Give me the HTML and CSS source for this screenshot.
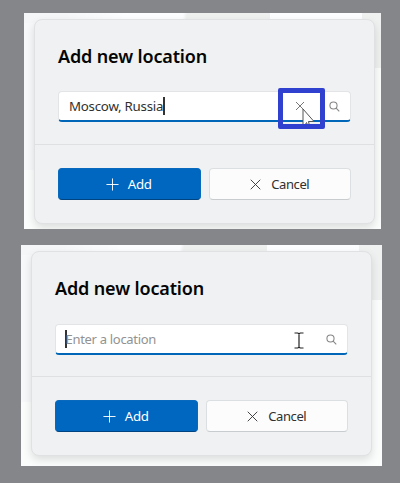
FILE: index.html
```
<!DOCTYPE html>
<html lang="en">
<head>
<meta charset="utf-8">
<title>Add new location</title>
<link rel="stylesheet" href="styles.css">
</head>
<body>
<main class="board">
  <section class="panel panel-first">
    <div class="dialog">
      <div class="body">
        <h1>Add new location</h1>
        <div class="field">
          <span class="value">Moscow, Russia</span><span class="caret"></span>
          <svg class="clear" viewBox="0 0 10 10"><path d="M1 1l8 8M9 1l-8 8"/></svg>
          <svg class="search" viewBox="0 0 12 12"><circle cx="4.9" cy="4.9" r="3.9"/><path d="M7.8 7.8l3.4 3.4"/></svg>
          <div class="highlight"></div>
          <svg class="pointer" viewBox="0 0 13 16"><path d="M1 1v17h1.5l2-3.5L6 18h1.5l-1-4.5H12z"/></svg>
        </div>
      </div>
      <div class="actions">
        <div class="button primary"><svg class="plus" viewBox="0 0 14 14"><path d="M7 .5v13M.5 7h13"/></svg><span class="label-add">Add</span></div>
        <div class="button"><svg class="cross" viewBox="0 0 12 12"><path d="M.8.8l10.4 10.4M11.2.8L.8 11.2"/></svg><span class="label-cancel">Cancel</span></div>
      </div>
    </div>
  </section>
  <section class="panel panel-second">
    <div class="dialog">
      <div class="body">
        <h1>Add new location</h1>
        <div class="field">
          <span class="caret"></span><span class="placeholder">Enter a location</span>
          <svg class="search" viewBox="0 0 12 12"><circle cx="4.9" cy="4.9" r="3.9"/><path d="M7.8 7.8l3.4 3.4"/></svg>
          <svg class="ibeam" viewBox="0 0 10 17"><path d="M.5 1h3.3L5 1.7 6.2 1h3.3M5 1.5v14M.5 16h3.3L5 15.3l1.2.7h3.3"/></svg>
        </div>
      </div>
      <div class="actions">
        <div class="button primary"><svg class="plus" viewBox="0 0 14 14"><path d="M7 .5v13M.5 7h13"/></svg><span class="label-add">Add</span></div>
        <div class="button"><svg class="cross" viewBox="0 0 12 12"><path d="M.8.8l10.4 10.4M11.2.8L.8 11.2"/></svg><span class="label-cancel">Cancel</span></div>
      </div>
    </div>
  </section>
</main>
</body>
</html>
```
FILE: styles.css
```
* { box-sizing: border-box; }
body {
  margin: 0;
  background: #85868a;
  color: #191919;
  font-family: "Noto Sans", "Open Sans", sans-serif;
}
svg { display: block; fill: none; overflow: visible; flex: none; }
.board { height: 483px; padding-top: 13px; overflow: hidden; }
.panel {
  overflow: hidden;
  background:
    linear-gradient(100deg, #f5f6f7 40px, #fcfdfe 100px, #fcfdfe 157px, #eeefef 161px) 0 0 / 246px 10px no-repeat,
    linear-gradient(#fcfdfe, #fcfdfe) 246px 0 / 92px 10px no-repeat,
    linear-gradient(#eff1f0, #eff1f0) 100% 0 / 42px 55px no-repeat,
    linear-gradient(#f7f8fa, #f7f8fa) 0 0 / 40px 157px no-repeat,
    #fbfcfc;
}
.panel-first { width: 357px; height: 216px; margin-left: 24px; padding: 6px 0 0 10px; }
.panel-second { width: 361px; height: 221px; margin: 16px 0 0 21px; padding: 6px 0 0 10px; }
.dialog {
  width: 341px;
  height: 205px;
  border: 1px solid #dfe1e3;
  border-radius: 8px;
  background: #eff1f2;
  box-shadow: 0 4px 8px rgba(0, 0, 0, .12);
}
.body { height: 125px; padding: 23px 23px 0; border-bottom: 1px solid #dee0e2; }
h1 {
  margin: 0;
  height: 26px;
  color: #050505;
  font-size: 18px;
  line-height: 26px;
  font-weight: 600;
  letter-spacing: -.14px;
  white-space: nowrap;
}
.field {
  position: relative;
  display: flex;
  align-items: center;
  width: 293px;
  height: 31px;
  margin-top: 22px;
  padding: 0 10.5px 0 10px;
  border: 1px solid #e2e4e6;
  border-bottom: 2px solid #0067b8;
  border-radius: 4px;
  background: #fff;
  font-size: 13.3px;
  line-height: 20px;
  white-space: nowrap;
}
.value { color: #303030; letter-spacing: -.25px; }
.caret { width: 2px; height: 18px; background: #333; }
.placeholder { margin-left: -1.5px; color: #929292; font-size: 13px; letter-spacing: -.3px; }
.clear { width: 10px; height: 10px; margin-left: auto; stroke: #777; }
.search { width: 11px; height: 11px; margin-left: 23.5px; stroke: #858585; stroke-width: 1.15; }
.panel-second .search { margin-left: auto; }
.panel-second .field { padding-left: 9px; margin-top: 23px; }
.highlight {
  position: absolute;
  left: 218.5px;
  top: -4px;
  width: 47px;
  height: 41px;
  border: 5px solid #3040cf;
  border-radius: 2px;
}
.pointer {
  position: absolute;
  left: 243px;
  top: 16px;
  width: 13px;
  height: 16px;
  overflow: hidden;
  fill: #fff;
  stroke: #555;
}
.ibeam { position: absolute; left: 238px; top: 7px; width: 10px; height: 17px; stroke: #222; stroke-width: 1.2; }
.actions { display: flex; gap: 8px; padding: 23px 23px 0; }
.button {
  display: flex;
  align-items: center;
  justify-content: center;
  gap: 10px;
  width: 143px;
  height: 32px;
  border: 1px solid #dcdfe1;
  border-bottom-color: #c9cccf;
  border-radius: 4px;
  background: #fcfcfc;
  color: #303030;
  font-size: 13.3px;
  line-height: 20px;
}
.label-cancel { font-size: 13px; letter-spacing: -.4px; }
.label-add { letter-spacing: -.3px; }
.primary { gap: 9px; padding-right: 1px; border-color: #0869bd #0869bd #004581; background: #0067c0; color: #fff; }
.plus { width: 13px; height: 13px; stroke: #fff; }
.cross { width: 11px; height: 11px; stroke: #333; }
```
